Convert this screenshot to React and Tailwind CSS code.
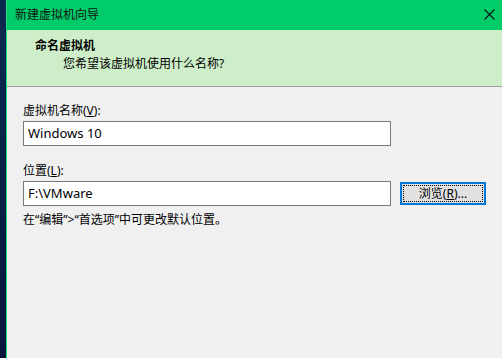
export default function App() {
  const font = { fontFamily: '"Noto Sans", "Noto Sans CJK SC", sans-serif' };
  return (
    <div className="flex h-[358px] w-[502px] overflow-hidden bg-[#f0f0f0] text-[12px] text-black" style={font}>
      <div className="w-[6px] shrink-0 bg-gradient-to-b from-[#0b2a52] to-[#07173a]" />
      <div className="flex flex-1 flex-col border-l border-[#1ee07f]">
        {/* title bar */}
        <div className="flex h-[30px] items-center justify-between bg-[#00cc6a] pl-[8px] pr-[7px]">
          <span className="text-[12px] leading-none text-[#111]">新建虚拟机向导</span>
          <svg width="11" height="11" viewBox="0 0 11 11" className="mt-[-1px]">
            <path d="M0.5 0.5 L10.5 10.5 M10.5 0.5 L0.5 10.5" stroke="#111" strokeWidth="1.1" />
          </svg>
        </div>
        {/* header */}
        <div className="flex h-[57px] flex-col border-b border-[#a0a0a0] bg-[#cdeec8]">
          <div className="mt-[8px] pl-[28px] text-[12px] font-bold leading-[16px]">命名虚拟机</div>
          <div className="mt-[2px] pl-[56px] text-[12px] leading-[16px]">您希望该虚拟机使用什么名称?</div>
        </div>
        {/* body */}
        <div className="flex flex-col pl-[16px] pt-[16px]">
          <div className="leading-[16px]">
            虚拟机名称(<span className="underline">V</span>):
          </div>
          <div className="mt-[2px] flex h-[25px] w-[368px] items-center border border-[#7a7a7a] bg-white pl-[4px] text-[13px] leading-none">
            Windows 10
          </div>
          <div className="mt-[17px] leading-[16px]">
            位置(<span className="underline">L</span>):
          </div>
          <div className="mt-[2px] flex items-center">
            <div className="flex h-[25px] w-[368px] items-center border border-[#7a7a7a] bg-white pl-[4px] text-[13px] leading-none">
              F:\VMware
            </div>
            <div className="ml-[9px] flex h-[23px] w-[86px] items-center justify-center border-2 border-[#0078d7] bg-[#e1e1e1] p-[1px]">
              <div className="flex h-full w-full items-center justify-center border border-dotted border-black leading-none">
                浏览(<span className="underline">R</span>)...
              </div>
            </div>
          </div>
          <div className="mt-[6px] leading-[16px]">在“编辑”&gt;“首选项”中可更改默认位置。</div>
        </div>
      </div>
    </div>
  );
}
